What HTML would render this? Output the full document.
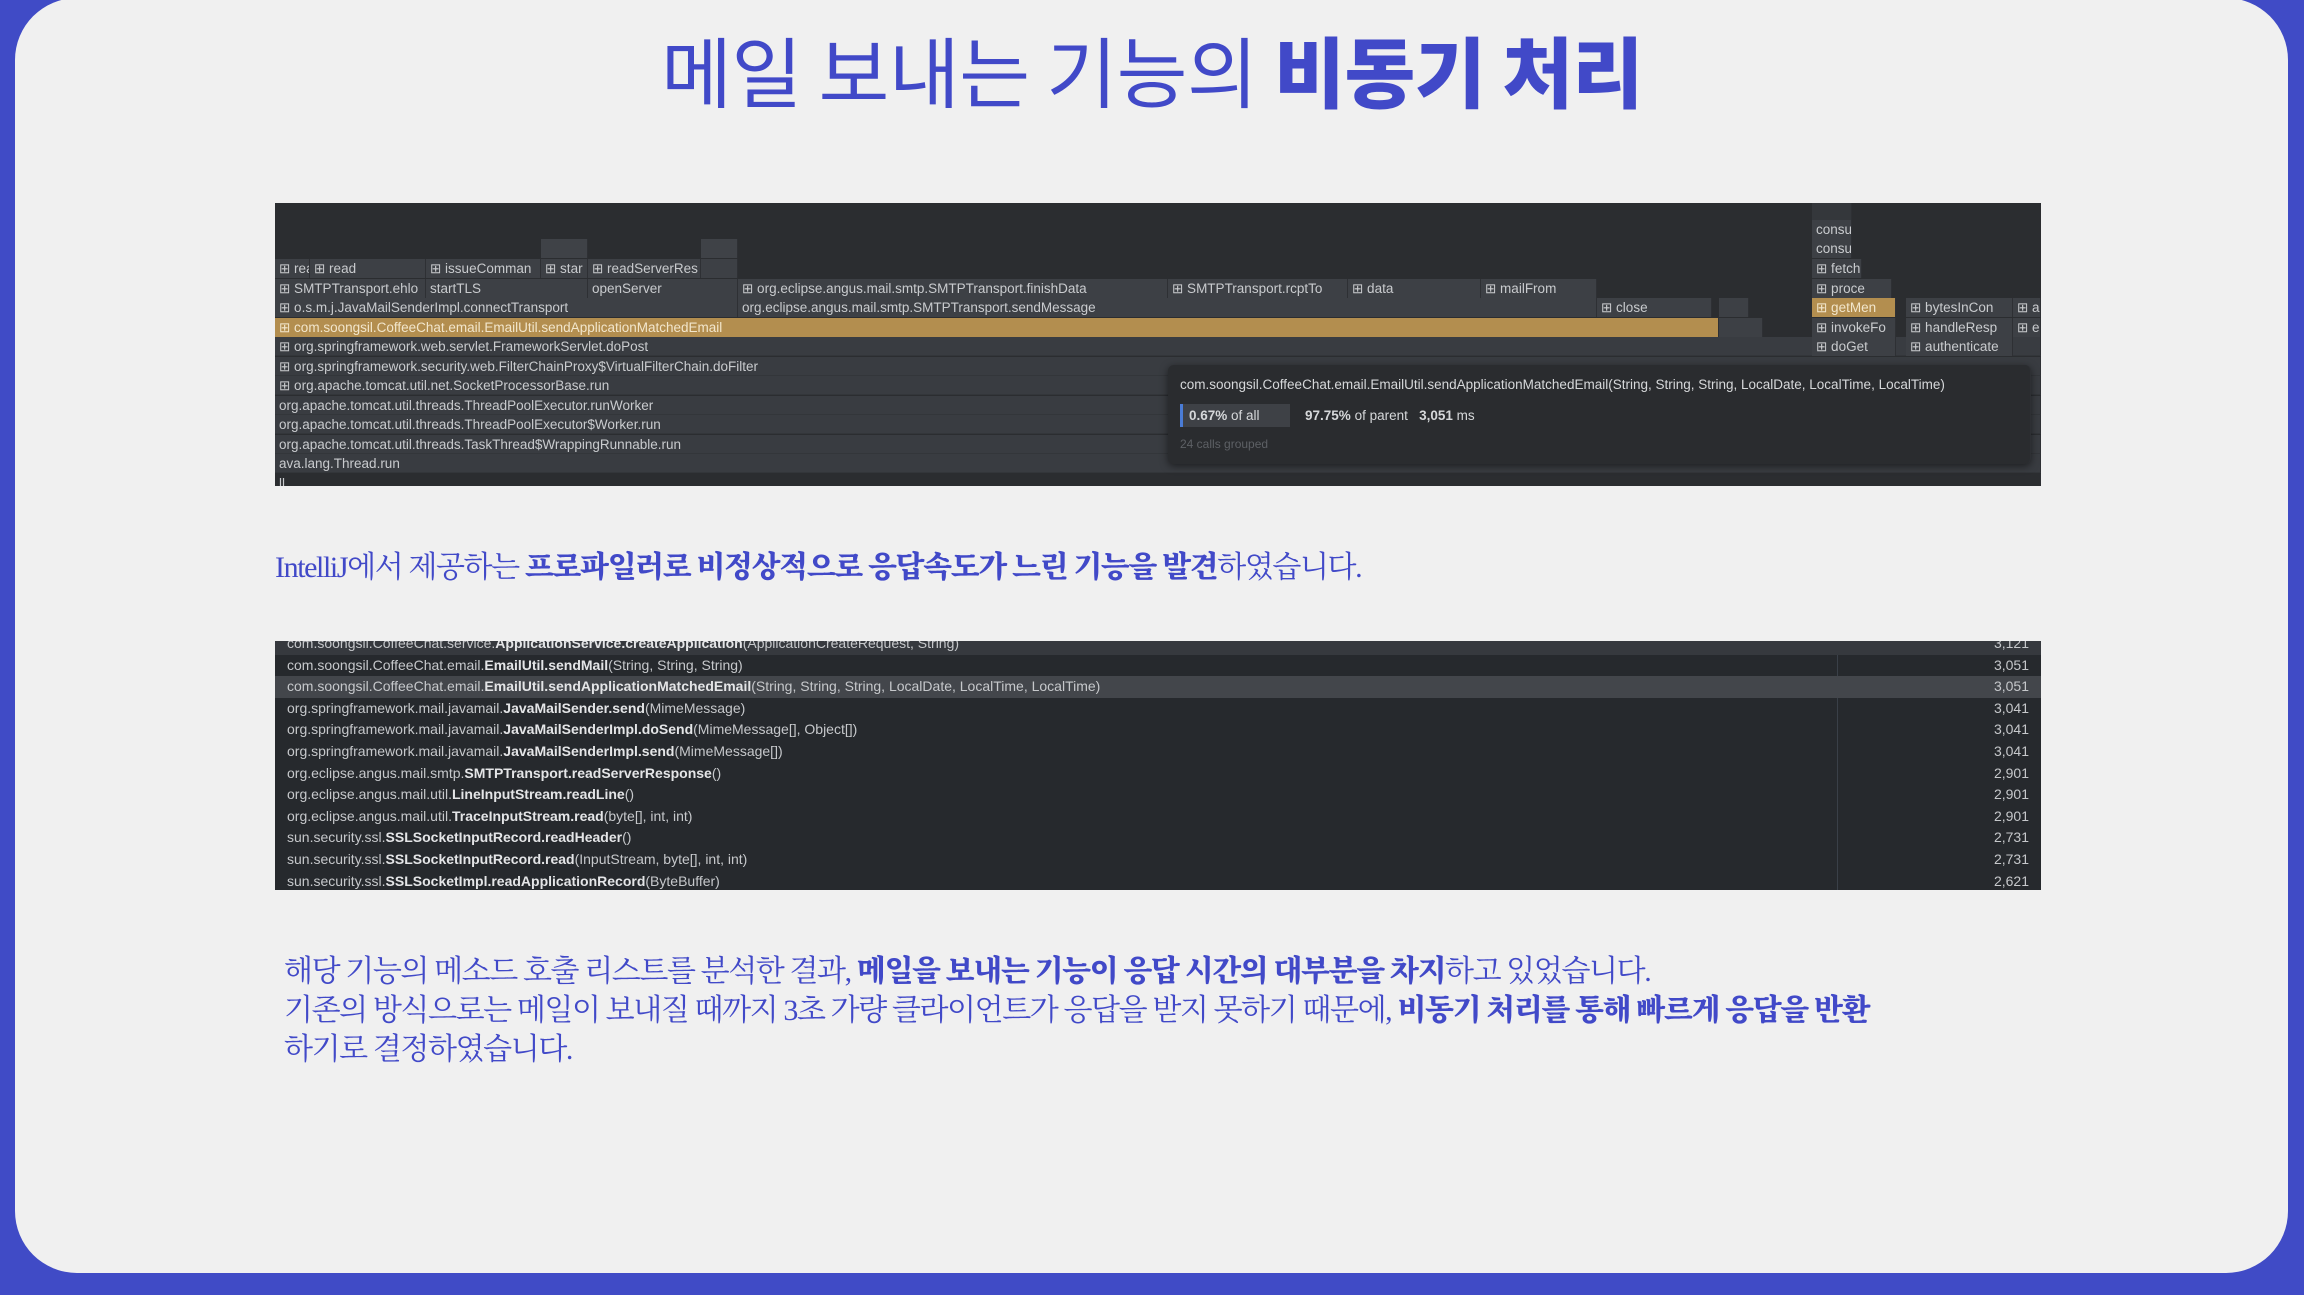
<!DOCTYPE html>
<html><head><meta charset="utf-8"><style>
*{margin:0;padding:0;box-sizing:border-box}
body{width:2304px;height:1295px;background:#404bc6;position:relative;overflow:hidden;font-family:"Liberation Sans","Noto Sans CJK KR",sans-serif}
.panel{position:absolute;left:15px;top:-2px;width:2273px;height:1275px;background:#f0f0f0;border-radius:62px}
h1{position:absolute;left:0;width:2304px;top:20px;text-align:center;font-size:77px;font-weight:400;color:#4149c8;font-family:"Noto Sans CJK KR",sans-serif;letter-spacing:-0.5px;line-height:100px}
h1 b{font-weight:900}
.fg{position:absolute;left:275px;top:203px;width:1766px;height:283px;background:#2b2d30;overflow:hidden;font-size:13.5px;color:#c9cbce}
.fg div{position:absolute;height:19px;background:#3d4045;border-right:1px solid #2e3034;line-height:19px;padding-left:4px;white-space:nowrap;overflow:hidden}
.fg .o{background:#b38e4f;color:#f2e6cc}
.fg .w{background:#393c41;border-bottom:1px solid #33363a}
.tip{background:#2a2c2f!important;border-radius:6px;box-shadow:0 2px 8px rgba(0,0,0,.5);height:auto!important;padding:10px 12px!important;overflow:visible!important}
.tb{position:absolute;left:275px;top:641px;width:1766px;height:249px;background:#26292d;overflow:hidden;font-size:14px;color:#c6c8cb}
.tb .r{position:absolute;left:0;width:1766px;height:21.6px;line-height:21.6px;padding-left:12px}
.tb .r b{color:#e4e5e7}
.tb .n{position:absolute;right:12px;top:0}
.p{position:absolute;font-family:"Liberation Serif","Noto Serif CJK KR",serif;font-size:30px;color:#4149c8;letter-spacing:-1.4px;white-space:nowrap}
.p b{font-weight:900}
</style></head><body>
<div class="panel"></div>
<h1>메일 보내는 기능의 <b>비동기 처리</b></h1>

<div class="fg">
<div style="left:266px;top:36px;width:47px;background:#3f4247"></div>
<div style="left:426px;top:36px;width:37px;background:#3f4247"></div>
<div style="left:0;top:56px;width:35px">⊞ rea</div>
<div style="left:35px;top:56px;width:116px">⊞ read</div>
<div style="left:151px;top:56px;width:115px">⊞ issueComman</div>
<div style="left:266px;top:56px;width:47px">⊞ star</div>
<div style="left:313px;top:56px;width:113px">⊞ readServerRes</div>
<div style="left:426px;top:56px;width:37px"></div>
<div style="left:0;top:76px;width:151px">⊞ SMTPTransport.ehlo</div>
<div style="left:151px;top:76px;width:162px">startTLS</div>
<div style="left:313px;top:76px;width:150px">openServer</div>
<div style="left:463px;top:76px;width:430px">⊞ org.eclipse.angus.mail.smtp.SMTPTransport.finishData</div>
<div style="left:893px;top:76px;width:180px">⊞ SMTPTransport.rcptTo</div>
<div style="left:1073px;top:76px;width:133px">⊞ data</div>
<div style="left:1206px;top:76px;width:116px">⊞ mailFrom</div>
<div style="left:0;top:95px;width:463px">⊞ o.s.m.j.JavaMailSenderImpl.connectTransport</div>
<div style="left:463px;top:95px;width:859px">org.eclipse.angus.mail.smtp.SMTPTransport.sendMessage</div>
<div style="left:1322px;top:95px;width:115px">⊞ close</div>
<div style="left:1444px;top:95px;width:30px"></div>
<div class="o" style="left:0;top:115px;width:1444px">⊞ com.soongsil.CoffeeChat.email.EmailUtil.sendApplicationMatchedEmail</div>
<div style="left:1444px;top:115px;width:44px"></div>
<div class="w" style="left:0;top:134px;width:1766px">⊞ org.springframework.web.servlet.FrameworkServlet.doPost</div>
<div class="w" style="left:0;top:154px;width:1766px">⊞ org.springframework.security.web.FilterChainProxy$VirtualFilterChain.doFilter</div>
<div class="w" style="left:0;top:173px;width:1766px">⊞ org.apache.tomcat.util.net.SocketProcessorBase.run</div>
<div class="w" style="left:0;top:193px;width:1766px">org.apache.tomcat.util.threads.ThreadPoolExecutor.runWorker</div>
<div class="w" style="left:0;top:212px;width:1766px">org.apache.tomcat.util.threads.ThreadPoolExecutor$Worker.run</div>
<div class="w" style="left:0;top:232px;width:1766px">org.apache.tomcat.util.threads.TaskThread$WrappingRunnable.run</div>
<div class="w" style="left:0;top:251px;width:1766px">ava.lang.Thread.run</div>
<div style="left:0;top:271px;width:1766px;background:#2b2d30">ll</div>
<div style="left:1537px;top:0;width:40px;background:#34373b"></div>
<div style="left:1537px;top:17px;width:40px">consu</div>
<div style="left:1537px;top:36px;width:40px">consu</div>
<div style="left:1537px;top:56px;width:50px">⊞ fetch</div>
<div style="left:1537px;top:76px;width:80px">⊞ proce</div>
<div class="o" style="left:1537px;top:95px;width:84px">⊞ getMen</div>
<div style="left:1537px;top:115px;width:84px">⊞ invokeFo</div>
<div style="left:1537px;top:134px;width:84px">⊞ doGet</div>
<div style="left:1631px;top:95px;width:107px">⊞ bytesInCon</div>
<div style="left:1738px;top:95px;width:28px">⊞ a</div>
<div style="left:1631px;top:115px;width:107px">⊞ handleResp</div>
<div style="left:1738px;top:115px;width:28px">⊞ e</div>
<div style="left:1631px;top:134px;width:107px">⊞ authenticate</div>
<div class="tip" style="left:893px;top:162px;width:863px">
<p style="font-size:13.5px;color:#d6d8da">com.soongsil.CoffeeChat.email.EmailUtil.sendApplicationMatchedEmail(String, String, String, LocalDate, LocalTime, LocalTime)</p>
<p style="margin-top:10px;font-size:13.5px;color:#d6d8da"><span style="display:inline-block;background:#3e4146;border-left:3px solid #4a7cd6;padding:2px 6px;width:110px"><b>0.67%</b> of all</span>&nbsp;&nbsp;&nbsp;&nbsp;<b>97.75%</b> of parent &nbsp;&nbsp;<b>3,051</b> ms</p>
<p style="margin-top:8px;font-size:12px;color:#5d6065">24 calls grouped</p>
</div>
</div>

<div class="p" style="left:275px;top:542px">IntelliJ에서 제공하는 <b>프로파일러로 비정상적으로 응답속도가 느린 기능을 발견</b>하였습니다.</div>

<div class="tb">
<div style="position:absolute;left:1562px;top:0;width:1px;height:249px;background:#3a4048"></div>
<div class="r" style="top:-8px;background:#36393e">com.soongsil.CoffeeChat.service.<b>ApplicationService.createApplication</b>(ApplicationCreateRequest, String)<span class="n">3,121</span></div>
<div class="r" style="top:13.6px">com.soongsil.CoffeeChat.email.<b>EmailUtil.sendMail</b>(String, String, String)<span class="n">3,051</span></div>
<div class="r" style="top:35.2px;background:#43464b">com.soongsil.CoffeeChat.email.<b>EmailUtil.sendApplicationMatchedEmail</b>(String, String, String, LocalDate, LocalTime, LocalTime)<span class="n">3,051</span></div>
<div class="r" style="top:56.8px">org.springframework.mail.javamail.<b>JavaMailSender.send</b>(MimeMessage)<span class="n">3,041</span></div>
<div class="r" style="top:78.4px">org.springframework.mail.javamail.<b>JavaMailSenderImpl.doSend</b>(MimeMessage[], Object[])<span class="n">3,041</span></div>
<div class="r" style="top:100px">org.springframework.mail.javamail.<b>JavaMailSenderImpl.send</b>(MimeMessage[])<span class="n">3,041</span></div>
<div class="r" style="top:121.6px">org.eclipse.angus.mail.smtp.<b>SMTPTransport.readServerResponse</b>()<span class="n">2,901</span></div>
<div class="r" style="top:143.2px">org.eclipse.angus.mail.util.<b>LineInputStream.readLine</b>()<span class="n">2,901</span></div>
<div class="r" style="top:164.8px">org.eclipse.angus.mail.util.<b>TraceInputStream.read</b>(byte[], int, int)<span class="n">2,901</span></div>
<div class="r" style="top:186.4px">sun.security.ssl.<b>SSLSocketInputRecord.readHeader</b>()<span class="n">2,731</span></div>
<div class="r" style="top:208px">sun.security.ssl.<b>SSLSocketInputRecord.read</b>(InputStream, byte[], int, int)<span class="n">2,731</span></div>
<div class="r" style="top:229.6px">sun.security.ssl.<b>SSLSocketImpl.readApplicationRecord</b>(ByteBuffer)<span class="n">2,621</span></div>
</div>

<div class="p" style="left:284px;top:946px">해당 기능의 메소드 호출 리스트를 분석한 결과, <b>메일을 보내는 기능이 응답 시간의 대부분을 차지</b>하고 있었습니다.</div>
<div class="p" style="left:284px;top:985px">기존의 방식으로는 메일이 보내질 때까지 3초 가량 클라이언트가 응답을 받지 못하기 때문에, <b>비동기 처리를 통해 빠르게 응답을 반환</b></div>
<div class="p" style="left:284px;top:1024px">하기로 결정하였습니다.</div>
</body></html>
